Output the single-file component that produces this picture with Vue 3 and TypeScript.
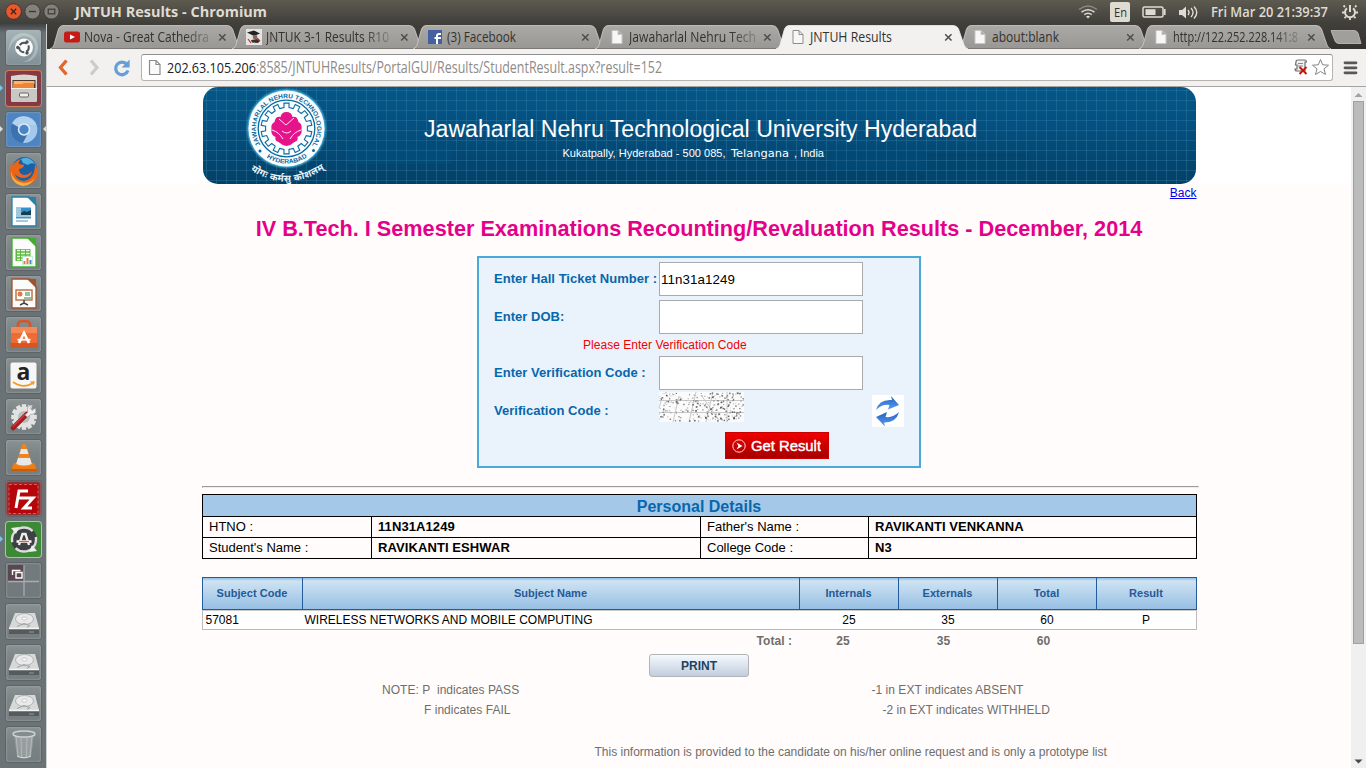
<script setup lang="ts">
import { h } from 'vue'

interface FitProps { t: string; w: number; size: number; color?: string; weight?: number; fade?: boolean }

// A line of text stretched to an exact advance width.
const Fit = (p: FitProps) =>
  h('svg', {
    width: p.w, height: 22, viewBox: `0 0 ${p.w} 22`,
    style: { flex: 'none', overflow: 'visible', display: 'block', maskImage: p.fade ? 'linear-gradient(90deg,#000 80%,rgba(0,0,0,.25))' : 'none' },
  }, [h('text', {
    x: 0, y: 16, textLength: p.w, lengthAdjust: 'spacingAndGlyphs', 'font-size': p.size,
    'font-family': '"Open Sans","Noto Sans",sans-serif', 'font-weight': p.weight ?? 400, fill: p.color ?? '#33322e',
  }, p.t)])
Fit.props = ['t', 'w', 'size', 'color', 'weight', 'fade']

interface Tab { title: string; w: number; icon: string; active?: boolean; fade?: boolean }
const tabs: Tab[] = [
  { title: 'Nova - Great Cathedra', w: 125, icon: 'youtube', fade: true },
  { title: 'JNTUK 3-1 Results R10', w: 123, icon: 'student', fade: true },
  { title: '(3) Facebook', w: 69, icon: 'facebook' },
  { title: 'Jawaharlal Nehru Tech', w: 127, icon: 'page', fade: true },
  { title: 'JNTUH Results', w: 82, icon: 'page', active: true },
  { title: 'about:blank', w: 67, icon: 'page' },
  { title: 'http://122.252.228.141:8', w: 125, icon: 'page', fade: true },
]

const launcher: string[] = ['dash', 'files', 'chromium', 'firefox', 'writer', 'calc', 'impress', 'software', 'amazon',
  'settings', 'vlc', 'filezilla', 'updater', 'workspace', 'disk', 'disk', 'disk', 'trash']

const docColor: Record<string, string> = { writer: '#2a7fa8', calc: '#3fae2a', impress: '#a0522d' }

const headers = ['Subject Code', 'Subject Name', 'Internals', 'Externals', 'Total', 'Result']
const marks = ['25', '35', '60', 'P']
const personal = [
  ['HTNO :', '11N31A1249', "Father's Name :", 'RAVIKANTI VENKANNA'],
  ["Student's Name :", 'RAVIKANTI ESHWAR', 'College Code :', 'N3'],
]

// Speckle noise of the verification image.
let seed = 7
const rnd = () => (seed = (seed * 16807) % 2147483647) / 2147483647
const dots = Array.from({ length: 260 }, () => ({ x: rnd() * 84, y: rnd() * 29, s: 0.7 + rnd() * 1, o: 0.2 + rnd() * 0.6 }))

// Toothed outline round the rose of the university seal.
const gear = (() => {
  const pts: string[] = []
  for (let i = 0; i < 14; i++) {
    const a = (i / 14) * Math.PI * 2 - Math.PI / 2
    const at = (d: number, r: number) => pts.push(`${(84.5 + Math.cos(a + d) * r).toFixed(2)},${(41.5 + Math.sin(a + d) * r).toFixed(2)}`)
    at(-0.1, 25.5); at(0.1, 25.5); at(0.12, 21); at(0.33, 21)
  }
  return pts.join(' ')
})()
const teeth = Array.from({ length: 12 }, (_, i) => i * 30)
</script>

<template>
  <div class="screen">
    <header class="panel">
      <svg class="winbtns" width="62" height="24" viewBox="0 0 62 24">
        <circle cx="13.500" cy="11.500" r="7.800" fill="#e9582c" stroke="#3a2f28" stroke-width=".8" />
        <path d="M10.800 8.800l5.400 5.400m0-5.400l-5.400 5.400" stroke="#4a2013" stroke-width="1.300" />
        <circle cx="32.500" cy="11.500" r="7.600" fill="#83817b" stroke="#383732" stroke-width=".8" />
        <path d="M29 11.500h7" stroke="#3b3a36" stroke-width="1.400" />
        <circle cx="51.500" cy="11.500" r="7.600" fill="#83817b" stroke="#383732" stroke-width=".8" />
        <rect x="48.200" y="9.200" width="6.600" height="4.600" fill="none" stroke="#3b3a36" stroke-width="1.200" />
      </svg>
      <Fit class="wintitle" t="JNTUH Results - Chromium" :w="192" :size="14" color="#dfdbd2" :weight="700" />
      <div class="tray">
        <svg width="20" height="24" viewBox="0 0 20 24" fill="none" stroke="#dfdbd2" stroke-width="1.500">
          <path d="M1 9.500q9-7 18 0" stroke="#8d8a83" /><path d="M3.500 12.200q6.500-5 13 0M6.300 14.700q3.700-3 7.400 0" /><path d="M8 16.500q2-1.600 4 0l-2 2z" fill="#dfdbd2" stroke="none" />
        </svg>
        <span class="lang"><Fit t="En" :w="13" :size="13" :weight="500" /></span>
        <svg width="25" height="24" viewBox="0 0 25 24"><rect x="1" y="7" width="20" height="10" rx="1.500" fill="none" stroke="#dfdbd2" stroke-width="1.500" /><rect x="3.500" y="9.200" width="10" height="5.800" fill="#dfdbd2" /><path d="M22.700 9v6" stroke="#dfdbd2" stroke-width="1.800" /></svg>
        <svg width="21" height="24" viewBox="0 0 21 24" fill="none" stroke="#dfdbd2" stroke-width="1.400"><path d="M1 10h3l4-3.500v12L4 15H1z" fill="#dfdbd2" stroke="none" /><path d="M10 10q2 2.500 0 5M13 8q4 4.500 0 9M16 6.500q5.500 6 0 12" /></svg>
        <Fit t="Fri Mar 20 21:39:37" :w="117" :size="14.5" color="#dfdbd2" :weight="600" />
        <svg width="18" height="24" viewBox="0 0 18 24" fill="none" stroke="#dfdbd2"><path d="M6 8.300a5 5 0 1 0 6 0" stroke-width="2" /><path d="M9 5v7" stroke-width="2" /><path d="M4 7L2.500 5.500M14 7l1.500-1.500M3.500 12.500H1M17 12.500h-2.500M5 16.500l-1.500 1.700M13 16.500l1.500 1.700M9 18v2" stroke-width="1.800" /></svg>
      </div>
    </header>

    <div class="desk">
      <nav class="launcher">
        <div v-for="(n, i) in launcher" :key="i" class="tile" :class="n">
          <svg width="35" height="35" viewBox="0 0 35 35">
            <g v-if="n === 'dash'">
              <path d="M2 22Q4 3 18 3q14 2 14 15-2 14-15 14Q29 28 29 17 28 6 17 6 6 9 2 22z" fill="#fff" opacity=".28" />
              <circle cx="18" cy="17.500" r="9" fill="#fafafa" /><circle cx="18" cy="17.500" r="4.800" fill="none" stroke="#4b5356" stroke-width="2" stroke-dasharray="8 2.050" stroke-dashoffset="3" />
              <circle cx="11.800" cy="17.500" r="1.700" fill="#4b5356" /><circle cx="21" cy="12" r="1.700" fill="#4b5356" /><circle cx="21" cy="23" r="1.700" fill="#4b5356" />
            </g>
            <g v-else-if="n === 'files'">
              <path d="M5 5q13-3 26 0v13H5z" fill="#d9d5cf" /><rect x="6.500" y="9" width="23" height="9" fill="#4b3832" /><rect x="7.500" y="10" width="21" height="3" fill="#ffb469" /><path d="M7 13h9l2-1h10v6H7z" fill="#f08434" />
              <rect x="5" y="17" width="26" height="14" rx="1" fill="#cbc8c4" /><path d="M5 17.500h26" stroke="#f4f2ee" /><rect x="13.500" y="22" width="9" height="4" rx="1" fill="#eee" stroke="#666" />
            </g>
            <g v-else-if="n === 'chromium'">
              <circle cx="18" cy="17.500" r="13.500" fill="#74a7d8" /><path d="M18 17.500L6 11.500A13.500 13.500 0 0 1 30.500 13z" fill="#b3d2ef" /><path d="M6 11.500A13.500 13.500 0 0 0 17 31l5-10z" fill="#3c72b0" /><path d="M30.500 13A13.500 13.500 0 0 1 17 31l7-13-3-5z" fill="#a5c9ec" />
              <circle cx="18" cy="17.500" r="6.200" fill="#dcebf8" /><circle cx="18" cy="17.500" r="4.700" fill="#4a86c6" />
            </g>
            <g v-else-if="n === 'firefox'">
              <circle cx="18.500" cy="16.500" r="12.500" fill="#1c5fa5" /><path d="M15 6q8-4 14 5-4-2-7 1l-5-2z" fill="#4fb0de" />
              <path d="M5 9l2 3q3-5 8-6-3 3-2 5l5 1q0 3-5 4 0 5 5 6 5 0 8-4-1 6-8 7-6 0-9-4 2 7 9 7 11-2 11-17l3 6q1 14-14 15Q4 31 4 18z" fill="#e8651a" /><path d="M5 18q2 11 13 12 9 0 12-8-4 11-13 11Q5 31 5 18z" fill="#fbb13a" />
            </g>
            <g v-else-if="docColor[n]">
              <path d="M6 3h17l7 7v22H6z" fill="#fcfcfc" :stroke="docColor[n]" stroke-width="1.300" /><path d="M21 3h9v9z" :fill="docColor[n]" />
              <template v-if="n === 'writer'"><rect x="10" y="13" width="15" height="12" fill="#9fc7de" /><path d="M15 14h10v7H15z" fill="#3292cb" /><path d="M15 21v-2l3-2 3 1 4-2v5z" fill="#173f51" /><path d="M10 23.500h15M10 27h12" stroke="#4d96bd" /></template>
              <template v-else-if="n === 'calc'"><rect x="9.500" y="14" width="15" height="12" fill="#5fb840" /><path d="M11 15.500h3M15 15.500h4M20 15.500h3.500M11 18.500h3M15 18.500h4M20 18.500h3.500M11 21.500h3M15 21.500h4M20 21.500h3.500M11 24.500h3M15 24.500h4" stroke="#e8f6e2" stroke-width="1.500" /><rect x="16.500" y="21.500" width="10" height="8" fill="#fff" stroke="#9db" stroke-width=".5" /><path d="M18.500 29v-3M21.500 29v-6" stroke="#e77c3a" stroke-width="2" /><path d="M24.500 29v-4" stroke="#4a86c6" stroke-width="2" /></template>
              <template v-else><rect x="10" y="14" width="16" height="10" fill="#fff" stroke="#c0744a" stroke-width="1.500" /><circle cx="14" cy="18" r="2.500" fill="#e17b46" /><path d="M19 17h5M19 19h5M18 22h7" stroke="#76aa83" stroke-width="1.500" /><path d="M18 24v3l-4 2m4-2l4 2" fill="none" stroke="#444" stroke-width="1.500" /></template>
            </g>
            <g v-else-if="n === 'software'">
              <path d="M12 11V7q0-3 6-3t6 3v4" fill="none" stroke="#d4562a" stroke-width="2.600" /><path d="M5 10h26v20H5z" fill="#ed6c33" /><path d="M5 10h26v6H5z" fill="#f58a54" /><path d="M4 26h28l-1 5H5z" fill="#da541f" />
              <path d="M13 26l5-10 5 10" fill="none" stroke="#fff" stroke-width="2.600" /><path d="M11.500 22.700h13" stroke="#fff" stroke-width="1.800" />
            </g>
            <g v-else-if="n === 'amazon'">
              <rect x="4.500" y="4.500" width="26" height="26" rx="2" fill="#f6f6f6" /><text x="17.500" y="21.500" text-anchor="middle" font-size="23" font-weight="700" font-family="Open Sans, sans-serif" fill="#222">a</text><path d="M7 24q10 7 19 1.500" fill="none" stroke="#f59a23" stroke-width="1.800" /><path d="M24 23.500l5-.3-1.500 4z" fill="#f59a23" />
            </g>
            <g v-else-if="n === 'settings'">
              <g fill="#e2e2e2"><circle cx="18" cy="18" r="10.500" /><rect v-for="a in teeth" :key="a" x="15.800" y="5.200" width="4.400" height="5" :transform="`rotate(${a} 18 18)`" /></g><circle cx="18" cy="18" r="6" fill="#b9bcbd" />
              <path d="M7 29L21 15" stroke="#ab1b22" stroke-width="4.600" stroke-linecap="round" /><path d="M7 27.500L19.500 15" stroke="#e2565a" stroke-width="1" /><path d="M19 16l3-3q-2-5 3-7l2 .3-3 3 2.500 2.500 3-3q1.500 5-3 6.500h-2l-3 3z" fill="#f0f0f0" stroke="#8d8d8d" stroke-width=".6" />
            </g>
            <g v-else-if="n === 'vlc'">
              <path d="M8 23h20l3 7H5z" fill="#ef7d16" /><path d="M16.500 4h3l7 21q-8.500 3-17 0z" fill="#f0841f" /><path d="M15 9h6l1.500 5h-9zM12 18h12l1.800 6q-8 3-15.600 0z" fill="#e8e8e8" /><path d="M5 29h26v2H5z" fill="#c75c09" />
            </g>
            <g v-else-if="n === 'filezilla'">
              <rect x="3" y="3.500" width="29" height="29" fill="#b5070b" stroke="#ef5050" stroke-width="1" stroke-dasharray="3 2" /><path d="M10 27l3-17h9M11.500 17h8M18 17h9l-9 10h8" fill="none" stroke="#fff" stroke-width="3" />
            </g>
            <g v-else-if="n === 'updater'">
              <circle cx="18" cy="17.500" r="13" fill="#3d4144" /><circle cx="18" cy="17.500" r="12" fill="none" stroke="#dcdcdc" stroke-width="2.400" stroke-dasharray="31 6.700" stroke-dashoffset="3" /><path d="M5 6l8-1-3 7zM31 29l-8 1 3-7z" fill="#eee" />
              <path d="M13 23l3.500-11h3l3.500 11" fill="none" stroke="#eee" stroke-width="2.400" /><path d="M10.500 19.500h15" stroke="#fff" stroke-width="2.600" /><path d="M13 19.500h10" stroke="#e8622c" stroke-width="1.300" />
            </g>
            <g v-else-if="n === 'workspace'">
              <rect x="2" y="2" width="16" height="16" fill="#5a4750" /><path d="M18 2v31M2 18.500h31" stroke="#a7adaf" stroke-width="1.300" /><path d="M6.500 12V7.500h8M10 9.500h6v5.500h-6z" fill="none" stroke="#fff" stroke-width="1.400" />
            </g>
            <g v-else-if="n === 'disk'">
              <path d="M9 9h20l4 15v5H3v-5z" fill="#d7d9d9" /><path d="M3 25h30v5H3z" fill="#555a5c" /><path d="M3 24.500h30" stroke="#f5f5f5" stroke-width="1.500" /><ellipse cx="18.500" cy="15" rx="9" ry="5.500" fill="#e9e9e9" stroke="#a8adaf" stroke-width=".9" /><ellipse cx="18.500" cy="14.500" rx="2.600" ry="1.500" fill="#fff" stroke="#aaa" stroke-width=".6" /><path d="M11 22.500l7-3 6 2-3 2" fill="none" stroke="#9da1a3" /><path d="M23 28h5" stroke="#999" />
            </g>
            <g v-else>
              <path d="M8 7h20l-3 23q-7 3-14 0z" fill="#aeb4b5" opacity=".55" /><path d="M10 8l2 21M15 9l.5 21M21 9l-.5 21M26 8l-2 21" stroke="#dfe3e3" opacity=".4" /><ellipse cx="18" cy="7" rx="11" ry="3" fill="#858c8e" stroke="#cdd2d2" stroke-width="1.500" /><path d="M11 29q7 3.500 14 0" fill="none" stroke="#d6dada" />
            </g>
          </svg>
        </div>
      </nav>

      <main class="browser">
        <div class="tabstrip">
          <div v-for="t in tabs" :key="t.title" class="tab" :class="{ active: t.active }">
            <svg class="shape" width="198" height="25" viewBox="0 0 198 25">
              <defs><linearGradient id="tg" x2="0" y2="1"><stop stop-color="#aba9a6" /><stop offset="1" stop-color="#999793" /></linearGradient></defs>
              <path d="M0 25Q3 24 4 21L8.500 5Q10 1.500 13 1.500H177Q181 1.500 182.500 5L188 21Q189.500 24.500 192 25z" :fill="t.active ? '#f2f1f0' : 'url(#tg)'" :stroke="t.active ? '#f2f1f0' : '#cfcdca'" stroke-width=".8" />
              <path v-if="!t.active" d="M2 24.500H191" stroke="#7b7975" />
            </svg>
            <svg class="fav" width="16" height="16" viewBox="0 0 16 16">
              <template v-if="t.icon === 'youtube'"><rect x="0" y="2.500" width="16" height="11" rx="2.500" fill="#c41b17" /><path d="M6 5.500v5l5-2.500z" fill="#fff" /></template>
              <template v-else-if="t.icon === 'student'"><rect width="16" height="16" fill="#e6e4e2" /><path d="M1 3.500l7-2 6 3-6 2.500z" fill="#222" /><circle cx="9" cy="8" r="2.300" fill="#8d6755" /><path d="M5 11l6-1 3 2-2 2-6-.5z" fill="#333" /><path d="M11 9l3 3M2 10l3 4" stroke="#be3038" stroke-width="1.200" /></template>
              <template v-else-if="t.icon === 'facebook'"><rect x="1" y="1" width="14" height="14" fill="#4460a0" /><path d="M10 15V8.500M14 5h-2q-2 0-2 2v2M7.500 9H14" fill="none" stroke="#fff" stroke-width="2" /></template>
              <path v-else d="M3 1.500h6L13 5.500V14.500H3zM9 1.500V5.500H13" fill="#f7f7f7" :stroke="t.active ? '#8d8d8d' : '#c9c7c4'" />
            </svg>
            <Fit class="tabtext" :t="t.title" :w="t.w" :size="14.5" :fade="t.fade" />
            <svg class="close" width="9" height="9" viewBox="0 0 9 9"><path d="M1.200 1.200l6.300 6.300m0-6.300L1.200 7.500" stroke="#4f4d49" stroke-width="1.500" /></svg>
          </div>
          <svg class="newtab" width="34" height="18" viewBox="0 0 34 18"><path d="M1 1.500H24Q27 1.500 28 4L31 14.500H9Q6 14.500 5 12z" fill="#a19f9b" stroke="#c4c2bf" stroke-width=".8" /></svg>
        </div>

        <div class="toolbar">
          <svg width="94" height="37" viewBox="0 0 94 37" fill="none">
            <path d="M19.500 11.500L13.500 18.500l6 7" stroke="#e4662d" stroke-width="3.300" />
            <path d="M44 11.500l6 7-6 7" stroke="#cdcbc8" stroke-width="3.200" />
            <path d="M80 15.500A6.300 6.300 0 1 0 81 21.500" stroke="#659fd6" stroke-width="3.300" /><path d="M82.700 10.500v8h-8z" fill="#659fd6" />
          </svg>
          <div class="omnibox">
            <svg width="14" height="18" viewBox="0 0 14 18"><path d="M1.500 1.500h6.500l4 4v10H1.500zM8 1.500v4h4" fill="#fafafa" stroke="#8b8b8b" stroke-width="1.200" /></svg>
            <span class="url"><Fit t="202.63.105.206" :w="89" :size="15" color="#222" /><Fit t=":8585/JNTUHResults/PortalGUI/Results/StudentResult.aspx?result=152" :w="406" :size="15.5" color="#8e8b87" /></span>
            <svg width="38" height="20" viewBox="0 0 38 20">
              <path d="M3 4q0-2 2-2h7q1.500 0 1.500 2h-1.500v9H4q-2 0-2-2h2V7H2.500z" fill="#f1f1f1" stroke="#6e6e6e" stroke-width="1.200" /><path d="M5 5.500h5M5 8h5" stroke="#888" /><path d="M6.500 9l7 7m0-7l-7 7" stroke="#c9150b" stroke-width="2" />
              <path d="M27.500 1.500l2.200 5.300 5.800.4-4.500 3.700 1.500 5.600-5-3-5 3 1.500-5.600-4.500-3.700 5.800-.4z" fill="#fff" stroke="#858585" />
            </svg>
          </div>
          <svg width="33" height="37" viewBox="0 0 33 37"><path d="M12 13.800h11M12 18.800h11M12 23.800h11" stroke="#575757" stroke-width="2.800" stroke-linecap="round" /></svg>
        </div>

        <div class="viewport">
          <div class="page">
            <div class="bannerband">
              <svg width="995" height="97" viewBox="0 0 995 97" class="banner">
                <defs>
                  <linearGradient id="bg" x2="0" y2="1"><stop stop-color="#045787" /><stop offset=".4" stop-color="#045080" /><stop offset="1" stop-color="#044066" /></linearGradient>
                  <pattern id="lines" width="10" height="10" x="4" y="3" patternUnits="userSpaceOnUse"><path d="M.5 0v10M0 .5h10" stroke="#3b84aa" stroke-opacity=".34" /></pattern>
                  <path id="arcTop" d="M59.100 58.500A30.500 30.500 0 1 1 109.900 58.500" /><path id="arcBot" d="M61.500 68A35 35 0 0 0 107.500 68" /><path id="motto" d="M48.500 83Q86 108 127 79" />
                  <filter id="halo" x="-20%" y="-20%" width="140%" height="140%"><feGaussianBlur stdDeviation="1.300" /></filter>
                </defs>
                <rect x="1" width="993" height="97" rx="15" fill="url(#bg)" /><rect x="1" width="993" height="97" rx="15" fill="url(#lines)" />
                <rect x="146" y="52" width="104" height="25" fill="#044c79" opacity=".8" /><rect x="146" y="52" width="104" height="25" fill="url(#lines)" opacity=".7" />
                <rect x="629" y="57" width="104" height="27" fill="#044a75" opacity=".8" /><rect x="629" y="57" width="104" height="27" fill="url(#lines)" opacity=".7" />
                <rect x="723" y="66" width="104" height="27" fill="#04456e" /><rect x="723" y="66" width="104" height="27" fill="url(#lines)" />
                <circle cx="84.500" cy="41.500" r="39" fill="#5fcbf0" filter="url(#halo)" /><circle cx="84.500" cy="41.500" r="38" fill="#fafdff" />
                <g fill="none" stroke="#0a6aa0"><circle cx="84.500" cy="41.500" r="28.300" stroke-width="1.300" /><polygon :points="gear" stroke-width="1.100" /></g>
                <g fill="#0b679b" font-family="Liberation Sans, sans-serif" font-weight="700"><text font-size="6.300"><textPath href="#arcTop" startOffset="1" textLength="130" lengthAdjust="spacingAndGlyphs">JAWAHARLAL NEHRU TECHNOLOGICAL</textPath></text><text font-size="6.300"><textPath href="#arcBot" startOffset="4" textLength="43" lengthAdjust="spacingAndGlyphs">HYDERABAD</textPath></text><circle cx="58" cy="64" r="1.500" /><circle cx="111.500" cy="63.500" r="1.500" /></g>
                <path d="M84.500 25q5 0 6 5 5-1 6 5 4 2 3 7 1 6-4 8 1 4-3 5-3 3-8 4-5-1-8-4-4-1-3-5-5-2-4-8-1-5 3-7 1-6 6-5 1-5 6-5z" fill="#e6148b" />
                <path d="M77 32l7 6 8-7M70 43q7 2 11 9M99 43q-7 2-11 9M80 44q5 4 9 0" fill="none" stroke="#fff" stroke-width=".9" />
                <text font-size="9.500" fill="#e7f4fb" font-family="Noto Sans Devanagari, Noto Sans, sans-serif" font-weight="700"><textPath href="#motto" textLength="79">योगः कर्मसु कौशलम्</textPath></text>
                <g fill="#fff" font-family="Liberation Sans, sans-serif"><text x="222" y="49.500" font-size="23.500" textLength="553" lengthAdjust="spacingAndGlyphs">Jawaharlal Nehru Technological University Hyderabad</text>
                  <text x="360.500" y="70" font-size="11" textLength="163" lengthAdjust="spacingAndGlyphs">Kukatpally, Hyderabad - 500 085,</text><text x="529" y="70" font-size="10.500" textLength="58" font-family="DejaVu Sans, sans-serif" lengthAdjust="spacingAndGlyphs">Telangana</text><text x="592" y="70" font-size="11" textLength="30" lengthAdjust="spacingAndGlyphs">, India</text></g>
              </svg>
            </div>
            <div class="column">
              <a class="back">Back</a>
              <h1>IV B.Tech. I Semester Examinations Recounting/Revaluation Results - December, 2014</h1>
              <form class="form">
                <div class="field"><label>Enter Hall Ticket Number :</label><div class="box">11n31a1249</div></div>
                <div class="field"><label>Enter DOB:</label><div class="box"></div></div>
                <div class="error">Please Enter Verification Code</div>
                <div class="field"><label>Enter Verification Code :</label><div class="box"></div></div>
                <div class="field">
                  <label>Verification Code :</label>
                  <svg class="captcha" width="85" height="30" viewBox="0 0 85 30"><rect width="85" height="30" fill="#fbfbfb" /><path d="M0 8.500H85M0 20.500H85M20 4L14 30M37 0L30 30M54 0L47 30M68 0V30M3 5L0 17M42 3L60 28" stroke="#bbb" stroke-width=".8" /><rect v-for="(d, i) in dots" :key="i" :x="d.x" :y="d.y" :width="d.s" :height="d.s" fill="#333" :opacity="d.o" /></svg>
                  <svg class="refresh" width="32" height="32" viewBox="0 0 32 32"><defs><linearGradient id="rf" x2="0" y2="1"><stop stop-color="#2461c5" /><stop offset="1" stop-color="#5a9cf0" /></linearGradient></defs><rect width="32" height="32" fill="#fff" /><path d="M4 15Q7 4 20 5L19 1l8 9-11 4.500 1.500-4.500Q10 9 4 15z" fill="url(#rf)" /><path d="M27 17Q24 28 12 27.500l1 4L4 22 15 17l-1.500 5Q21 23 27 17z" fill="url(#rf)" /></svg>
                </div>
                <div class="get"><svg width="14" height="14" viewBox="0 0 14 14"><circle cx="7" cy="7" r="6.200" fill="none" stroke="#ffd5d5" /><path d="M4.500 3.500L10.500 7l-6 3.500L6.500 7z" fill="#fff" /></svg><svg width="70" height="20" viewBox="0 0 70 20"><text x="0" y="14.500" font-family="Liberation Sans" font-size="14.500" textLength="70" lengthAdjust="spacingAndGlyphs" fill="#fff" stroke="#fff" stroke-width=".4">Get Result</text></svg></div>
              </form>
              <hr />
              <section class="personal">
                <div class="ptitle">Personal Details</div>
                <template v-for="r in personal" :key="r[0]"><div v-for="(c, i) in r" :key="i" :class="{ strong: i % 2 }">{{ c }}</div></template>
              </section>
              <section class="ghead"><div v-for="x in headers" :key="x">{{ x }}</div></section>
              <section class="grow"><div class="code">57081</div><div>WIRELESS NETWORKS AND MOBILE COMPUTING</div><div v-for="m in marks" :key="m" class="num">{{ m }}</div></section>
              <section class="totals"><span class="tl">Total :</span><span>25</span><span>35</span><span>60</span></section>
              <button class="print">PRINT</button>
              <div class="notes"><span>NOTE: P&nbsp; indicates PASS</span><span>-1 in EXT indicates ABSENT</span></div>
              <div class="notes second"><span>F indicates FAIL</span><span>-2 in EXT indicates WITHHELD</span></div>
              <p class="foot">This information is provided to the candidate on his/her online request and is only a prototype list</p>
            </div>
          </div>
          <div class="scrollbar"><svg width="15" height="14" viewBox="0 0 15 14"><path d="M7.500 6l4 4h-8z" fill="#a2a2a2" /></svg><div class="thumb"></div><svg width="15" height="14" viewBox="0 0 15 14"><path d="M7.500 9.500l4-4h-8z" fill="#484848" /></svg></div>
        </div>
      </main>
    </div>
  </div>
</template>

<style>
body { margin: 0; overflow: hidden; }
</style>

<style scoped>
* { box-sizing: border-box; }
.screen { width: 1366px; height: 768px; overflow: hidden; display: flex; flex-direction: column; font-family: "Liberation Sans", Arial, sans-serif; }
.panel { height: 24px; flex: none; display: flex; background: linear-gradient(#5d5a50, #3f3e39); }
.wintitle { margin-left: 13px; margin-top: 1px; }
.tray { margin-left: auto; display: flex; padding-right: 7px; }
.tray > :nth-child(1) { margin-right: 12px; }
.lang { width: 20px; height: 20px; margin: 2px 12px 0 0; padding-left: 3.5px; background: #dfdbd2; border-radius: 2px; }
.lang svg { margin-top: -1px; }
.tray > :nth-child(3) { margin-right: 11px; }
.tray > :nth-child(4) { margin-right: 12px; }
.tray > :nth-child(5) { margin-right: 13px; margin-top: 1px; }
.desk { flex: 1; display: flex; min-height: 0; }
.launcher { width: 47px; flex: none; padding: 6px 0 0 5.5px; display: flex; flex-direction: column; gap: 6px; background: linear-gradient(#3f4345, #6a7174 9px, #6c7376); border-right: 1px solid #cfd1d1; }
.tile { width: 35px; height: 35px; flex: none; border-radius: 3px; background: linear-gradient(#8a9193, #7d8486 40%, #767d80); box-shadow: 0 0 0 1px #5c6467, inset 0 0 2px #b5babb; position: relative; }
.tile svg { display: block; overflow: visible; }
.tile.dash { background: linear-gradient(#a6b4b8, #7f9096); }
.tile.files { background: #843944; box-shadow: 0 0 0 1px #d2805a; }
.tile.chromium { background: #4e84bf; }
.tile.updater { background: #3c8a36; box-shadow: 0 0 0 1px #b9bcb1; }
.tile.filezilla { background: #8f2a2e; }
.tile.workspace { background: #737a7d; }
.tile.files::before, .tile.chromium::before, .tile.updater::before { content: ""; position: absolute; left: -6px; top: 14px; border: 3px solid transparent; border-left-color: #73c8ef; border-right: 0; }
.tile.chromium::before { border-left-color: #ddd; }
.tile.chromium::after { content: ""; position: absolute; right: -5px; top: 14px; border: 3px solid transparent; border-right-color: #ddd; border-left: 0; }
.browser { flex: 1; min-width: 0; display: flex; flex-direction: column; }
.tabstrip { height: 25px; flex: none; display: flex; padding-left: 3px; background: linear-gradient(#403f3a, #33322e); }
.tab { width: 181.5px; height: 25px; flex: none; position: relative; display: flex; align-items: center; padding-left: 14px; z-index: 1; }
.tab.active { z-index: 2; }
.tab > * { position: relative; }
.tab > .shape { position: absolute; left: 0; top: 0; }
.fav { flex: none; margin-right: 4px; }
.tabtext { margin-top: 1px; }
.tab > .close { position: absolute; left: 168px; top: 9px; }
.newtab { margin: 5px 0 0 9px; }
.toolbar { height: 38px; flex: none; display: flex; background: #f2f1f0; border-bottom: 1px solid #a5a4a2; }
.omnibox { width: 1193px; height: 27px; margin-top: 5px; border: 1px solid #b5b4b2; border-top-color: #8f8e8c; border-radius: 3px; background: #fff; display: flex; align-items: center; padding: 0 1px 0 6px; }
.url { display: flex; margin-left: 5px; flex: 1; }
.viewport { flex: 1; min-height: 0; display: flex; }
.page { flex: 1; background: #fffcfb; }
.bannerband { height: 97px; background: #fff; padding-left: 155px; }
.banner { display: block; }
.column { width: 995px; margin-left: 155px; }
.back { display: block; height: 18px; line-height: 18px; text-align: right; color: #00e; text-decoration: underline; font-size: 12px; margin-right: .5px; }
h1 { margin: 14px -10px 0; height: 26px; line-height: 26px; font-size: 21.67px; color: #e5008a; text-align: center; white-space: nowrap; padding-right: 1px; }
.form { width: 444px; height: 212px; margin: 14px 0 0 275px; border: 2px solid #4ba8da; background: #eaf3fb; padding: 4px 0 0 15px; }
.field { display: flex; height: 38px; }
label { width: 165px; flex: none; line-height: 34px; font-size: 13px; font-weight: 700; color: #0866ac; white-space: nowrap; letter-spacing: .03px; }
.box { width: 204px; height: 34px; border: 1px solid #aaa; background: #fff; padding-left: 1px; line-height: 34px; font-size: 13.33px; letter-spacing: .08px; }
.error { height: 18px; line-height: 14px; padding-left: 89px; color: #f00000; font-size: 12px; letter-spacing: .03px; }
.captcha { margin-top: -2px; }
.refresh { margin: 1px 0 0 128px; }
.get { width: 104px; height: 27px; margin-left: 231px; display: flex; align-items: center; gap: 5px; padding-left: 6px; border: 1px solid #c00; background: linear-gradient(#f10000, #a60000); }
hr { width: 997px; height: 2px; margin: 18px 0 0; border: 1px solid #9a9a9a; border-bottom-color: #eee; border-right-color: #eee; }
.personal { margin-top: 6px; width: 995px; height: 65px; display: grid; grid-template-columns: 168px 328px 167px 327px; grid-template-rows: 21px 20px 20px; gap: 1px; background: #000; border: 1px solid #000; font-size: 13px; line-height: 20px; }
.personal > div { background: #fffcfb; padding-left: 6px; }
.personal > .ptitle { grid-column: 1 / -1; background: #a4c8e7; color: #0866ac; font-size: 16px; font-weight: 700; text-align: center; line-height: 23px; padding: 0 1px 0 0; }
.strong { font-weight: 700; letter-spacing: .09px; }
.ghead { margin-top: 18px; height: 33px; display: grid; grid-template-columns: 99px 496px 98px 98px 98px 99px; gap: 1px; background: #235b9c; border: 1px solid #235b9c; font-size: 11px; font-weight: 700; color: #245a98; text-align: center; line-height: 31px; letter-spacing: .04px; }
.ghead > div { background: linear-gradient(#8fbce2, #cfe3f2 3px, #96bfe3); padding-right: 1px; }
.grow { height: 20px; border: 1px solid #bbb; border-top-color: #ccc; background: #fff; display: grid; grid-template-columns: 100px 497px 99px 99px 99px 99px; font-size: 12px; line-height: 18px; }
.grow > div { padding-left: 1.5px; }
.grow > .code { padding-left: 2.5px; }
.grow > .num { padding: 0 1px 0 0; text-align: center; }
.totals { height: 24px; display: grid; grid-template-columns: 590px 102px 99px 101px; line-height: 23px; font-size: 12px; font-weight: 700; color: #6e6e6e; text-align: center; }
.totals .tl { text-align: right; letter-spacing: .05px; }
.print { display: block; margin-left: 447px; width: 100px; height: 23px; padding: 0; border: 1px solid #b2b5b8; border-radius: 3px; background: linear-gradient(#f4f9fd, #c2cddd); color: #22415e; font: 700 12px "Liberation Sans", sans-serif; }
.notes { margin-top: 3px; height: 20px; line-height: 20px; display: grid; grid-template-columns: 489.5px 1fr; padding-left: 180px; font-size: 12px; color: #6e6e6e; letter-spacing: .03px; }
.notes.second { margin-top: 0; grid-template-columns: 458.5px 1fr; padding-left: 222px; }
.foot { margin: 22px 0 0 392.5px; line-height: 20px; font-size: 12px; color: #6e6e6e; white-space: nowrap; }
.scrollbar { width: 15px; flex: none; background: #f0f0f0; display: flex; flex-direction: column; }
.thumb { width: 11px; height: 543px; margin: 0 2px auto; background: #bbb; border: 1px solid #a0a0a0; }
</style>
